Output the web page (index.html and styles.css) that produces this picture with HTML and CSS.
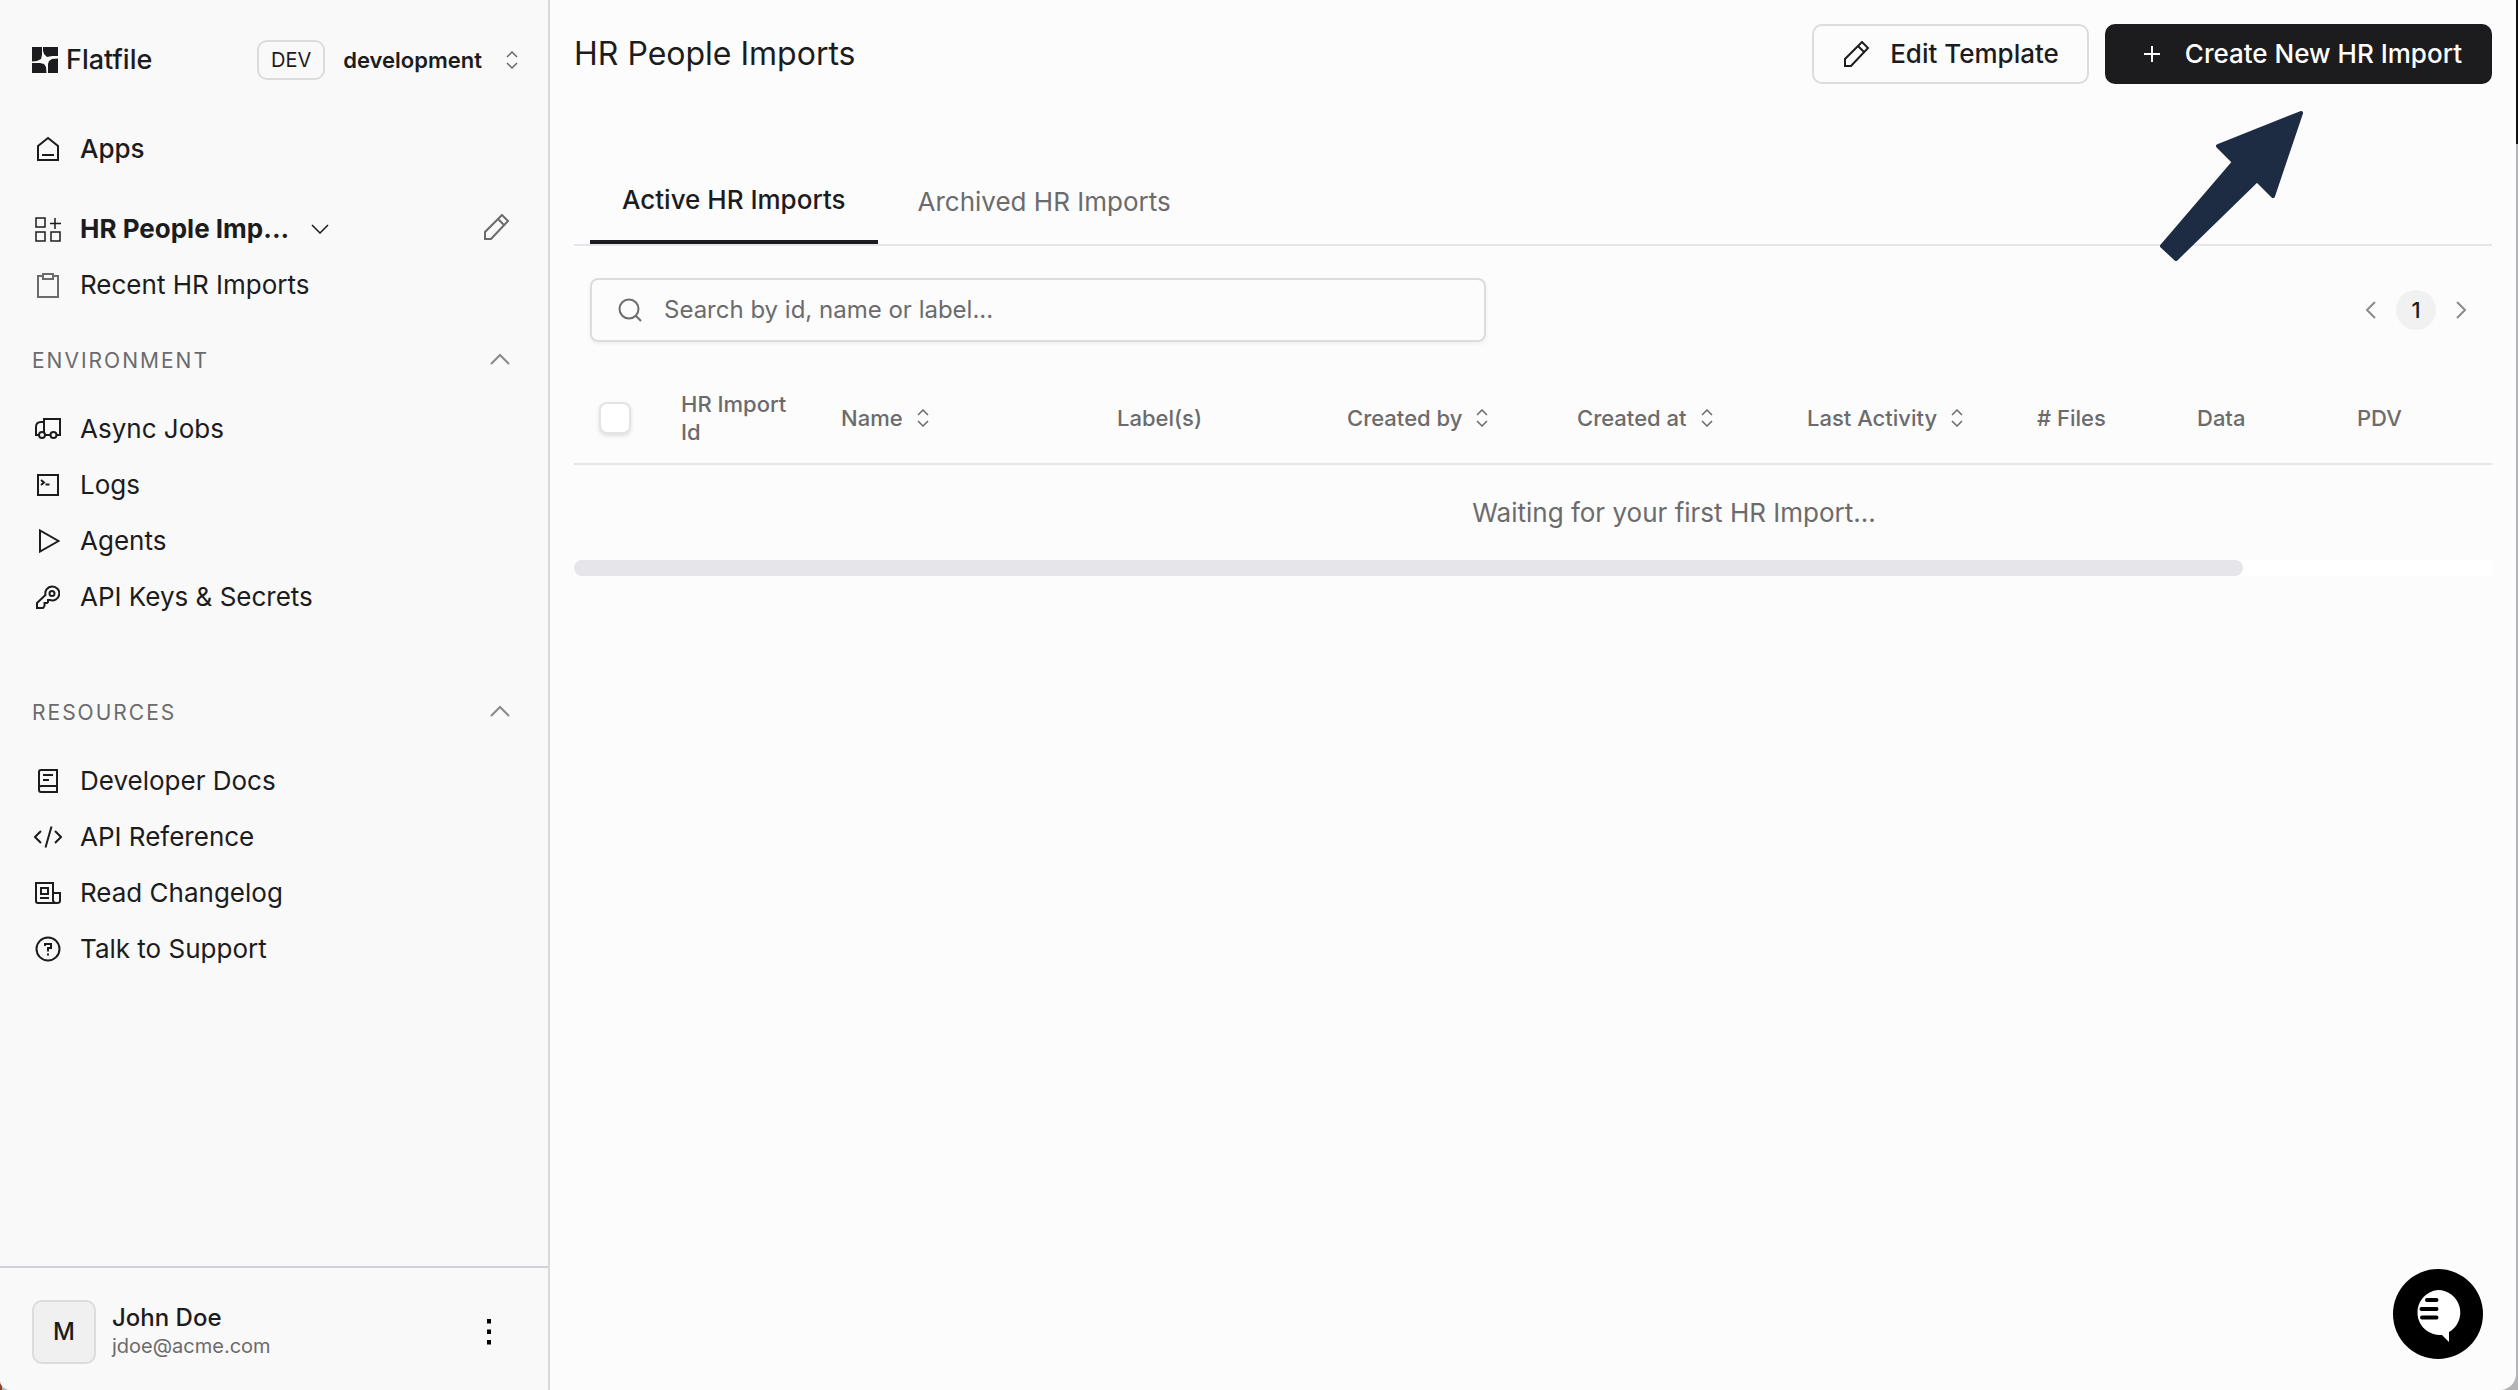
FILE: index.html
```html
<!DOCTYPE html>
<html lang="en">
<head>
    <meta charset="UTF-8">
    <meta name="viewport" content="width=device-width, initial-scale=1.0">
    <title>HR People Imports | Flatfile</title>
    <link rel="stylesheet" href="styles.css">
</head>
<body>
    <!-- Shared icons -->
    <svg class="sprite" aria-hidden="true">
        <symbol id="sort" viewBox="0 0 12 18">
            <path d="M1 6l5-5 5 5M1 12l5 5 5-5"/>
        </symbol>
        <symbol id="pencil" viewBox="0 0 26 26">
            <path d="M1 25v-7L18 1l6 6L7 25zM14 5l6 6"/>
        </symbol>
        <symbol id="chevron-up" viewBox="0 0 20 12">
            <path d="M1 11l9-9 9 9"/>
        </symbol>
    </svg>

    <div class="app">
        <aside class="sidebar">
            <div class="sidebar-header">
                <a href="#" class="logo">
                    <svg width="26" height="26" viewBox="0 0 26 26" aria-hidden="true">
                        <path d="M0 0h10v8l-1 4-4 2-5 .5zM11 0h15v9h-6l-5 1-3-3-1-3zM0 16h8l4 1 2 3 .5 6H0zM16 26v-9l1-3 3-2 6-.5V26z"/>
                    </svg>
                    Flatfile
                </a>
                <button class="env-switch">
                    <span class="badge">DEV</span>
                    development
                    <svg class="icon muted thin" width="12" height="18"><use href="#sort"/></svg>
                </button>
            </div>

            <nav class="menu">
                <a href="#" class="item medium">
                    <span class="item-icon"><svg class="icon" width="24" height="26" viewBox="0 0 24 26"><path d="M2 10l10-8 10 8v14H2zM6 19h12"/></svg></span>
                    Apps
                </a>
                <div class="space-row">
                    <button class="item bold">
                        <span class="item-icon"><svg class="icon thin" width="26" height="26" viewBox="0 0 26 26"><path d="M1 2h9v9H1zM1 16h9v9H1zM16 16h9v9h-9zM20 2v11M15 7.500h11"/></svg></span>
                        HR People Imp...
                        <svg class="icon thin chevron" width="18" height="10" viewBox="0 0 18 10"><path d="M1 1l8 8 8-8"/></svg>
                    </button>
                    <button class="icon-btn edit" aria-label="Edit"><svg class="icon muted" width="26" height="26"><use href="#pencil"/></svg></button>
                </div>
                <a href="#" class="item">
                    <span class="item-icon"><svg class="icon muted" width="24" height="26" viewBox="0 0 24 26"><path d="M7 4H2v21h20V4h-5M7 2h10v5H7z"/></svg></span>
                    Recent HR Imports
                </a>
            </nav>

            <nav class="menu">
                <button class="menu-title">ENVIRONMENT <svg class="icon light" width="20" height="12"><use href="#chevron-up"/></svg></button>
                <a href="#" class="item">
                    <span class="item-icon"><svg class="icon" width="26" height="22" viewBox="0 0 26 22"><path d="M9 17h6M4 17H1V9q0-5 5-5h3M9 15V1h16v16h-3"/><circle cx="7" cy="17" r="3"/><circle cx="18.500" cy="17" r="3"/></svg></span>
                    Async Jobs
                </a>
                <a href="#" class="item">
                    <span class="item-icon"><svg class="icon" width="24" height="24" viewBox="0 0 24 24"><path d="M2 2h20v20H2zM5 7l3 2.500L5 12M9.500 11.500h4"/></svg></span>
                    Logs
                </a>
                <a href="#" class="item">
                    <span class="item-icon"><svg class="icon" width="24" height="24" viewBox="0 0 24 24"><path d="M4 1.500v21L22.500 12z"/></svg></span>
                    Agents
                </a>
                <a href="#" class="item">
                    <span class="item-icon"><svg class="icon" width="24" height="24" viewBox="0 0 24 24"><path d="M9.500 10A7 7 0 1 1 14 15h-2v2l-1 1H8.500v3L7 23H1v-5z"/><circle cx="16" cy="8.500" r="2.500"/></svg></span>
                    API Keys &amp; Secrets
                </a>
            </nav>

            <nav class="menu resources">
                <button class="menu-title">RESOURCES <svg class="icon light" width="20" height="12"><use href="#chevron-up"/></svg></button>
                <a href="#" class="item">
                    <span class="item-icon"><svg class="icon" width="24" height="26" viewBox="0 0 24 26"><path d="M21 18v6H5q-2 0-2-2V4q0-2 2-2h16v16H5q-2 0-2 2M7 7h10M7 12h6"/></svg></span>
                    Developer Docs
                </a>
                <a href="#" class="item">
                    <span class="item-icon"><svg class="icon" width="28" height="24" viewBox="0 0 28 24"><path d="M7 6l-6 6 6 6M21 6l6 6-6 6M17.500 1.500l-6 21"/></svg></span>
                    API Reference
                </a>
                <a href="#" class="item">
                    <span class="item-icon"><svg class="icon" width="26" height="24" viewBox="0 0 26 24"><path d="M18 12V2H1v18q0 2 2 2h19q3 0 3-2v-8h-7v7q0 3 3 3M6 7h7v6H6zM5 17h9"/></svg></span>
                    Read Changelog
                </a>
                <a href="#" class="item">
                    <span class="item-icon"><svg class="icon" width="26" height="26" viewBox="0 0 26 26"><circle cx="13" cy="13" r="11.500"/><path d="M10 10V8h6v4h-3v3.500M13 17.500v2"/></svg></span>
                    Talk to Support
                </a>
            </nav>

            <div class="user">
                <div class="avatar">M</div>
                <div class="user-info">
                    <div class="user-name">John Doe</div>
                    <div class="user-mail">jdoe@acme.com</div>
                </div>
                <button class="icon-btn more" aria-label="Account menu"><svg width="6" height="26" viewBox="0 0 6 26"><path d="M1 0h4v4.500H1zM1 10.500h4V15H1zM1 21h4v4.500H1z"/></svg></button>
            </div>
        </aside>

        <main class="main">
            <header class="page-header">
                <h1>HR People Imports</h1>
                <button class="btn"><svg class="icon" width="26" height="26"><use href="#pencil"/></svg> Edit Template</button>
                <button class="btn primary"><svg class="icon" width="18" height="18" viewBox="0 0 18 18"><path d="M9 1v16M1 9h16"/></svg> Create New HR Import</button>
            </header>

            <div class="tabs" role="tablist">
                <button class="tab active" role="tab" aria-selected="true">Active HR Imports</button>
                <button class="tab" role="tab" aria-selected="false">Archived HR Imports</button>
            </div>

            <div class="toolbar">
                <label class="search">
                    <svg class="icon muted" width="24" height="24" viewBox="0 0 24 24"><circle cx="11" cy="11" r="9.500"/><path d="M18 18l5 5"/></svg>
                    <input type="text" placeholder="Search by id, name or label..." aria-label="Search">
                </label>
                <div class="pager">
                    <button class="icon-btn" aria-label="Previous page"><svg class="icon light" width="10" height="18" viewBox="0 0 10 18"><path d="M9 1L1 9l8 8"/></svg></button>
                    <button class="page">1</button>
                    <button class="icon-btn" aria-label="Next page"><svg class="icon light" width="10" height="18" viewBox="0 0 10 18"><path d="M1 1l8 8-8 8"/></svg></button>
                </div>
            </div>

            <div class="table-wrap">
                <table>
                    <colgroup>
                        <col class="col-check"><col class="col-sm"><col class="col-lg"><col class="col-md"><col class="col-md"><col class="col-md"><col class="col-md"><col class="col-sm"><col class="col-sm"><col>
                    </colgroup>
                    <thead>
                        <tr>
                            <th class="check"><input type="checkbox" aria-label="Select all"></th>
                            <th>HR Import Id</th>
                            <th><button class="sort">Name <svg class="icon muted thin" width="12" height="18"><use href="#sort"/></svg></button></th>
                            <th>Label(s)</th>
                            <th><button class="sort">Created by <svg class="icon muted thin" width="12" height="18"><use href="#sort"/></svg></button></th>
                            <th><button class="sort">Created at <svg class="icon muted thin" width="12" height="18"><use href="#sort"/></svg></button></th>
                            <th><button class="sort">Last Activity <svg class="icon muted thin" width="12" height="18"><use href="#sort"/></svg></button></th>
                            <th># Files</th>
                            <th>Data</th>
                            <th>PDV</th>
                        </tr>
                    </thead>
                    <tbody>
                        <tr>
                            <td colspan="10" class="empty">Waiting for your first HR Import...</td>
                        </tr>
                    </tbody>
                </table>
            </div>
            <div class="scroll-track">
                <div class="scroll-thumb"></div>
            </div>
        </main>

        <svg class="pointer" width="145" height="152" viewBox="0 0 145 152" aria-hidden="true">
            <path d="M142 3L59 36l16 16L3 136l14 13 81-79 16 16z"/>
        </svg>

        <button class="chat" aria-label="Open chat">
            <svg width="90" height="90" viewBox="0 0 90 90">
                <path class="bubble" d="M45 21a22.500 22.500 0 0 1 11 42v10l-7-7a22.500 22.500 0 1 1-4-45z"/>
                <path class="lines" d="M34 31h9.500M28.500 40h15M29 48.500h14.500"/>
            </svg>
        </button>
    </div>
</body>
</html>
```
FILE: styles.css
```css
* {
    box-sizing: border-box;
}
body {
    margin: 0;
    font-family: Inter, "Liberation Sans", sans-serif;
    font-size: 26px;
    line-height: 32px;
    color: #1c1c1e;
    background: linear-gradient(90deg, #8f4522 2px, transparent 2px), linear-gradient(#111 144px, #b4b4b6 144px);
}
button, input {
    font: inherit;
    color: inherit;
}
button {
    background: none;
    border: none;
    padding: 0;
    cursor: pointer;
}
a {
    color: inherit;
    text-decoration: none;
}
svg {
    display: block;
    flex: none;
}
.sprite {
    position: absolute;
    width: 0;
    height: 0;
}
.icon {
    fill: none;
    stroke: #1c1c1e;
    stroke-width: 2;
}
.icon.thin {
    stroke-width: 1.5;
}
.icon.muted {
    stroke: #6b6b6d;
}
.icon.light {
    stroke: #8a8a8c;
}
.icon-btn {
    display: flex;
    align-items: center;
    justify-content: center;
}

.app {
    position: relative;
    display: flex;
    min-height: 100vh;
    margin-right: 2px;
    background: #fcfcfc;
    border-radius: 0 0 16px 10px;
    overflow: hidden;
}

/* Sidebar */
.sidebar {
    display: flex;
    flex-direction: column;
    flex: none;
    width: 550px;
    padding-top: 40px;
    background: #f9f9f9;
    border-right: 2px solid #d9d9d9;
}
.sidebar-header {
    display: flex;
    align-items: center;
    justify-content: space-between;
    padding: 0 30px 0 32px;
    margin-bottom: 41px;
}
.logo {
    display: flex;
    align-items: center;
    gap: 8px;
    font-size: 27px;
    font-weight: 500;
}
.logo svg {
    fill: #1c1c1e;
}
.env-switch {
    display: flex;
    align-items: center;
    font-size: 22px;
    font-weight: 600;
}
.badge {
    padding: 2px 12px;
    margin-right: 18px;
    border: 2px solid #dcdcdc;
    border-radius: 10px;
    font-size: 20px;
    font-weight: 400;
}
.env-switch .icon {
    margin-left: 24px;
}
.menu {
    padding: 0 32px;
    margin-bottom: 24px;
}
.item {
    display: flex;
    align-items: center;
    gap: 16px;
    height: 56px;
}
.item-icon {
    display: flex;
    justify-content: center;
    width: 32px;
}
.medium {
    font-weight: 500;
}
.bold {
    font-weight: 700;
}
.chevron {
    margin-left: 6px;
}
.space-row {
    display: flex;
    align-items: center;
    justify-content: space-between;
    padding-right: 6px;
    margin-top: 24px;
}
.edit {
    padding-bottom: 4px;
}
.menu-title {
    display: flex;
    align-items: center;
    justify-content: space-between;
    width: 100%;
    height: 48px;
    padding-right: 6px;
    margin-bottom: 16px;
    font-size: 21px;
    letter-spacing: 2px;
    color: #6b6b6d;
}
.menu-title .icon {
    margin-bottom: 4px;
}
.resources {
    margin-top: 40px;
}
.user {
    display: flex;
    align-items: center;
    gap: 16px;
    padding: 32px 56px 26px 32px;
    margin-top: auto;
    border-top: 2px solid #d1d1db;
}
.avatar {
    width: 64px;
    height: 64px;
    border: 2px solid #dcdcdc;
    border-radius: 10px;
    background: #f0f0f0;
    font-size: 24px;
    font-weight: 500;
    line-height: 60px;
    text-align: center;
}
.user-info {
    flex: 1;
    line-height: 28px;
}
.user-name {
    font-size: 24px;
    font-weight: 500;
}
.user-mail {
    font-size: 20px;
    color: #6b6b6d;
}

/* Main area */
.main {
    flex: 1;
    min-width: 0;
    padding: 24px;
}
.page-header {
    display: flex;
    align-items: center;
    gap: 16px;
}
h1 {
    flex: 1;
    margin: 0;
    font-size: 32px;
    font-weight: 400;
}
.btn {
    display: flex;
    align-items: center;
    gap: 20px;
    height: 60px;
    padding: 0 28px 0 30px;
    border: 2px solid #dcdcdc;
    border-radius: 10px;
    font-weight: 500;
}
.btn.primary {
    gap: 24px;
    padding-left: 36px;
    background: #1c1c1e;
    border-color: #1c1c1e;
    color: #fff;
}
.btn.primary .icon {
    stroke: #fff;
}
.tabs {
    display: flex;
    gap: 8px;
    padding: 0 16px;
    margin-top: 72px;
    border-bottom: 2px solid #e5e5ea;
}
.tab {
    height: 88px;
    padding: 4px 32px 0;
    color: #6b6b6d;
}
.tab.active {
    border-bottom: 4px solid #1c1c1e;
    color: #1c1c1e;
    font-weight: 500;
}
.toolbar {
    display: flex;
    align-items: center;
    justify-content: space-between;
    padding: 0 26px 0 16px;
    margin-top: 32px;
}
.search {
    display: flex;
    align-items: center;
    gap: 22px;
    width: 48%;
    max-width: 896px;
    height: 64px;
    padding: 0 26px;
    border: 2px solid #dcdcdc;
    border-radius: 8px;
    box-shadow: 0 2px 4px rgba(0, 0, 0, 0.06);
    font-size: 24px;
}
.search input {
    flex: 1;
    padding: 0;
    border: none;
    outline: none;
    background: none;
}
.search input::placeholder {
    color: #6b6b6d;
    opacity: 1;
}
.pager {
    display: flex;
    align-items: center;
    gap: 20px;
}
.page {
    width: 40px;
    height: 40px;
    border-radius: 50%;
    background: #f1f1f1;
    font-size: 22px;
    font-weight: 500;
}
.table-wrap {
    margin-top: 30px;
    overflow-x: auto;
    scrollbar-width: none;
}
table {
    width: 2200px;
    table-layout: fixed;
    border-collapse: collapse;
}
.col-check {
    width: 75px;
}
.col-sm {
    width: 160px;
}
.col-md {
    width: 230px;
}
.col-lg {
    width: 276px;
}
th {
    height: 92px;
    padding: 0 16px 0 32px;
    border-bottom: 2px solid #e5e5ea;
    font-size: 22px;
    font-weight: 500;
    line-height: 28px;
    text-align: left;
    color: #6b6b6d;
}
.check {
    padding: 0 0 0 25px;
}
.check input {
    display: block;
    appearance: none;
    width: 32px;
    height: 32px;
    margin: 0;
    border: 2px solid #e4e4e4;
    border-radius: 8px;
    background: #fff;
    box-shadow: 0 2px 4px rgba(0, 0, 0, 0.12);
}
.sort {
    display: flex;
    align-items: center;
    gap: 14px;
}
.empty {
    height: 96px;
    padding: 0;
    text-align: center;
    color: #6b6b6d;
}
.scroll-track {
    background: #fff;
}
.scroll-thumb {
    width: 87%;
    height: 16px;
    border-radius: 8px;
    background: #e5e5ea;
}

/* Floating items */
.pointer {
    position: absolute;
    top: 110px;
    right: 212px;
    fill: #1d2b43;
    stroke: #1d2b43;
    stroke-width: 4;
    stroke-linejoin: round;
}
.chat {
    position: fixed;
    right: 35px;
    bottom: 31px;
    width: 90px;
    height: 90px;
    border-radius: 50%;
    background: #000;
}
.bubble {
    fill: #fff;
}
.lines {
    fill: none;
    stroke: #000;
    stroke-width: 4;
    stroke-linecap: round;
}
```
